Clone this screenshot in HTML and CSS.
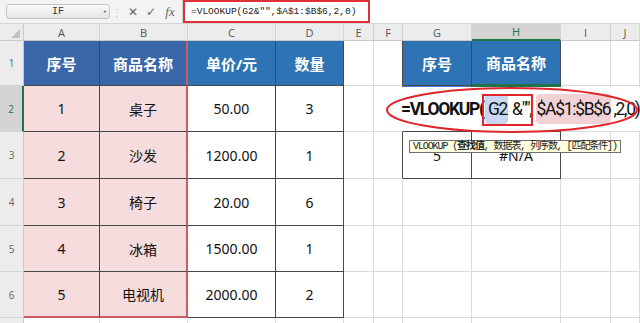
FILE: index.html
```html
<!DOCTYPE html>
<html lang="zh-CN">
<head>
  <meta charset="UTF-8" />
  <meta name="viewport" content="width=device-width, initial-scale=1.0"/>
  <title>VLOOKUP #N/A</title>
  <link rel="stylesheet" href="styles.css">
</head>
<body>
<div class="fxbar">
  <div class="namebox"><span>IF</span><i>▾</i></div>
  <div class="grip">⋮</div>
  <div class="fxbtn">✕</div>
  <div class="fxbtn">✓</div>
  <div class="fxbtn fx">fx</div>
  <div class="fxinput">
    <div class="fxtext">=VLOOKUP(G2&amp;"",$A$1:$B$6,2,0)</div>
  </div>
</div>

<div class="sheet">
  <!-- column headers -->
  <div class="corner"></div>
  <div class="colhead">A</div>
  <div class="colhead">B</div>
  <div class="colhead">C</div>
  <div class="colhead">D</div>
  <div class="colhead">E</div>
  <div class="colhead">F</div>
  <div class="colhead">G</div>
  <div class="colhead sel">H</div>
  <div class="colhead">I</div>
  <div class="colhead">J</div>

  <!-- row 1 -->
  <div class="rowhead">1</div>
  <div class="cell t hd range">序号</div>
  <div class="cell t hd range rb">商品名称</div>
  <div class="cell t hd">单价/元</div>
  <div class="cell t hd">数量</div>
  <div class="cell"></div>
  <div class="cell tl"></div>
  <div class="cell t hd">序号</div>
  <div class="cell t hd act-top">商品名称</div>
  <div class="cell"></div>
  <div class="cell"></div>

  <!-- row 2 -->
  <div class="rowhead sel">2</div>
  <div class="cell t pk">1</div>
  <div class="cell t pk rb">桌子</div>
  <div class="cell t">50.00</div>
  <div class="cell t">3</div>
  <div class="cell"></div>
  <div class="cell tl"></div>
  <div class="cell t ref"></div>
  <div class="cell t act"></div>
  <div class="cell"></div>
  <div class="cell"></div>

  <!-- row 3 -->
  <div class="rowhead">3</div>
  <div class="cell t pk">2</div>
  <div class="cell t pk rb">沙发</div>
  <div class="cell t">1200.00</div>
  <div class="cell t">1</div>
  <div class="cell"></div>
  <div class="cell tl"></div>
  <div class="cell t">5</div>
  <div class="cell t">#N/A</div>
  <div class="cell"></div>
  <div class="cell"></div>

  <!-- row 4 -->
  <div class="rowhead">4</div>
  <div class="cell t pk">3</div>
  <div class="cell t pk rb">椅子</div>
  <div class="cell t">20.00</div>
  <div class="cell t">6</div>
  <div class="cell"></div>
  <div class="cell"></div>
  <div class="cell"></div>
  <div class="cell"></div>
  <div class="cell"></div>
  <div class="cell"></div>

  <!-- row 5 -->
  <div class="rowhead">5</div>
  <div class="cell t pk">4</div>
  <div class="cell t pk rb">冰箱</div>
  <div class="cell t">1500.00</div>
  <div class="cell t">1</div>
  <div class="cell"></div>
  <div class="cell"></div>
  <div class="cell"></div>
  <div class="cell"></div>
  <div class="cell"></div>
  <div class="cell"></div>

  <!-- row 6 -->
  <div class="rowhead">6</div>
  <div class="cell t pk bb">5</div>
  <div class="cell t pk rb bb">电视机</div>
  <div class="cell t">2000.00</div>
  <div class="cell t">2</div>
  <div class="cell"></div>
  <div class="cell"></div>
  <div class="cell"></div>
  <div class="cell"></div>
  <div class="cell"></div>
  <div class="cell"></div>

  <!-- row 7 (cut off at the bottom) -->
  <div class="rowhead"></div>
  <div class="cell"></div>
  <div class="cell"></div>
  <div class="cell"></div>
  <div class="cell"></div>
  <div class="cell"></div>
  <div class="cell"></div>
  <div class="cell"></div>
  <div class="cell"></div>
  <div class="cell"></div>
  <div class="cell"></div>

  <!-- in-cell editor for G2 -->
  <div class="editor">
    <b>=VLOOKUP(</b><span class="hl-blue">G2</span><span class="amp">&amp;""</span>,<span class="hl-pink">$A$1:$B$6</span>,2,0)
  </div>
  <div class="mark-box"></div>
  <svg class="oval" width="256" height="50" viewBox="0 0 256 50">
    <ellipse cx="127" cy="24" rx="125" ry="22" fill="none" stroke="#e0262b" stroke-width="2"/>
  </svg>
  <div class="tip">VLOOKUP (<b>查找值</b>, 数据表, 列序数, [匹配条件])</div>
</div>
</body>
</html>
```

FILE: styles.css
```css
* { margin: 0; padding: 0; box-sizing: border-box; }
html, body {
  width: 640px; height: 323px; overflow: hidden;
  background: #fff; font-family: "Noto Sans", "Noto Sans CJK SC", sans-serif;
}

/* formula bar */
.fxbar {
  height: 24px; display: flex; align-items: center;
  background: #f3f3f3; border-bottom: 1px solid #d4d4d4;
}
.namebox {
  margin-left: 6px; width: 104px; height: 15px;
  border: 1px solid #c4c4c4; border-radius: 3px;
  background: linear-gradient(#fbfbfb, #e4e4e4);
  display: flex; align-items: center; position: relative;
  font-family: "Liberation Mono", monospace; font-size: 10px; color: #333;
}
.namebox span { flex: 1; text-align: center; }
.namebox i {
  font-style: normal; font-size: 7px; color: #777;
  position: absolute; right: 2px; top: 3px;
}
.grip { width: 14px; text-align: center; color: #c0c0c0; font-size: 10px; }
.fxbtn {
  width: 18px; text-align: center; color: #666;
  font-family: "DejaVu Sans", sans-serif; font-size: 12px;
}
.fxbtn.fx {
  font-family: "Liberation Serif", serif; font-style: italic;
  font-size: 13px; width: 20px; margin-right: 2px;
}
.fxinput {
  flex: 1; height: 23px; background: #fff;
  border-left: 1px solid #d0d0d0; display: flex; align-items: center;
}
.fxtext {
  width: 187px; height: 23px; border: 2px solid #e0303a;
  padding-left: 6px; display: flex; align-items: center;
  font-family: "Liberation Mono", monospace; font-size: 9.5px; color: #222;
}

/* grid */
.sheet {
  position: relative;
  display: grid;
  grid-template-columns: 24px 76px 88px 88px 68px 30px 29px 69px 89px 50px 29px;
  grid-template-rows: 17px 45px 46px 47px 47px 46px 46px 20px;
}
.corner {
  background: #ececec; border-right: 1px solid #c8c8c8; border-bottom: 1px solid #c8c8c8;
  position: relative;
}
.corner::after {
  content: ""; position: absolute; right: 3px; bottom: 2px;
  border-left: 9px solid transparent; border-bottom: 9px solid #c2c2c2;
}
.colhead {
  background: #ececec; border-right: 1px solid #d4d4d4; border-bottom: 1px solid #c8c8c8;
  display: flex; align-items: center; justify-content: center;
  font-family: "Open Sans", sans-serif; font-size: 11px; color: #555;
}
.colhead.sel { background: #d4d4d4; border-bottom: 2px solid #217346; color: #217346; }
.rowhead {
  background: #ececec; border-right: 1px solid #c8c8c8; border-bottom: 1px solid #d4d4d4;
  display: flex; align-items: center; justify-content: center;
  font-family: "Open Sans", sans-serif; font-size: 10px; color: #666;
}
.rowhead.sel { background: #d4d4d4; border-right: 2px solid #217346; color: #217346; }

.cell {
  border-right: 1px solid #dadada; border-bottom: 1px solid #dadada;
  display: flex; align-items: center; justify-content: center;
  font-size: 14px; color: #111;
}
.cell.t { border-right-color: #474747; border-bottom-color: #474747; }
.cell.tl { border-right-color: #474747; }
.cell.hd {
  background: #2e74b5; color: #fff; font-weight: bold; font-size: 15px;
}
.cell.hd.range { background: #3a66aa; }
.cell.pk { background: #f6dcdc; }
.cell.rb { border-right: 2px solid #cf5a60; }
.cell.bb { border-bottom: 2px solid #cf5a60; }
.cell.act-top { border-bottom: 2px solid #217346; }
.cell.ref { box-shadow: inset 0 0 0 1px #4a7ad0; }
.cell.act { box-shadow: inset 0 0 0 2px #217346; }

/* in-cell editor and annotations */
.editor {
  position: absolute; left: 401px; top: 63px; width: 239px; height: 44px;
  background: #fff; display: flex; align-items: center;
  font-family: Roboto, sans-serif; font-size: 17.5px; color: #111;
  letter-spacing: -1.3px; white-space: nowrap;
}
.editor b { font-weight: bold; }
.hl-blue {
  background: #c7d7f1; border-radius: 4px; padding: 5px 1px 5px 3px; margin-left: 1px;
}
.amp { margin-left: 4px; }
.hl-pink {
  background: #f3d2d6; border-radius: 4px; padding: 5px 1px; margin: 0 2px 0 4px;
}
.mark-box {
  position: absolute; left: 482px; top: 70px; width: 51px; height: 32px;
  border: 2px solid #e0262b;
}
.oval { position: absolute; left: 385px; top: 62px; }
.tip {
  position: absolute; left: 409px; top: 116px; height: 13px;
  padding: 0 3px; background: #ffffe1; border: 1px solid #6f6f6f;
  font-family: "Liberation Mono", "Noto Sans CJK SC", monospace;
  font-size: 10px; line-height: 11px; color: #222; letter-spacing: -1.1px;
  white-space: nowrap;
}
.tip b { font-weight: bold; }
```
